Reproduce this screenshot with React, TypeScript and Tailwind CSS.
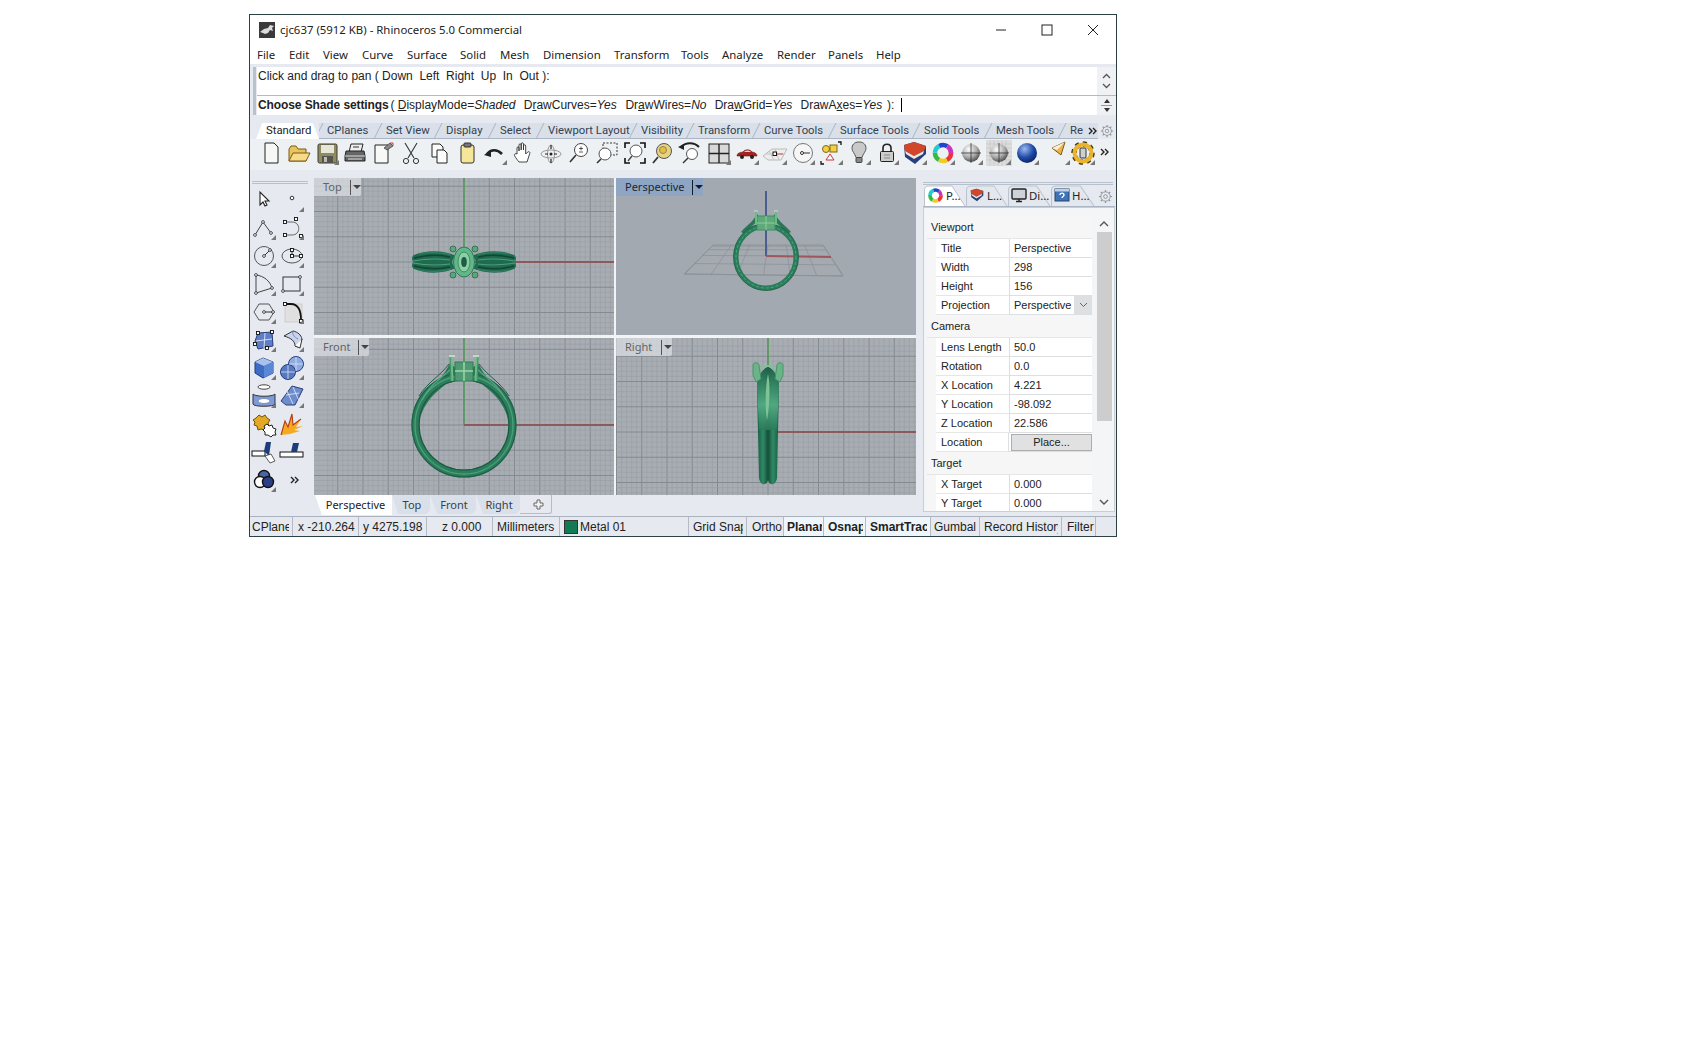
import type { ReactNode } from 'react';

const UI = "font-['Noto_Sans',sans-serif]";
const ARIAL = "font-['Liberation_Sans',Arial,sans-serif]";
const ROBOTO = "font-['Roboto',sans-serif]";

/* ---------- small helpers ---------- */

function Ico({ children, more }: { children: ReactNode; more?: boolean }) {
  return (
    <svg width="28" height="28" viewBox="0 0 28 28" className="block">
      {children}
      {more && <polygon points="26,21 26,26 21,26" fill="#777" />}
    </svg>
  );
}

function Chevrons({ color = '#222' }: { color?: string }) {
  return (
    <svg width="10" height="8" viewBox="0 0 10 8">
      <path d="M1 1l3 3-3 3M5 1l3 3-3 3" fill="none" stroke={color} strokeWidth="1.4" />
    </svg>
  );
}

function Handle({ x, y }: { x: number; y: number }) {
  return <rect x={x - 1.5} y={y - 1.5} width="3" height="3" fill="#fff" stroke="#111" strokeWidth="0.9" />;
}

function Dot({ x, y }: { x: number; y: number }) {
  return <circle cx={x} cy={y} r="1.4" fill="#fff" stroke="#222" strokeWidth="0.8" />;
}

function Sphere({ id, c1, c2, c3, r = 10 }: { id: string; c1: string; c2: string; c3: string; r?: number }) {
  return (
    <>
      <defs>
        <radialGradient id={id} cx="0.38" cy="0.3" r="0.8">
          <stop offset="0" stopColor={c1} />
          <stop offset="0.55" stopColor={c2} />
          <stop offset="1" stopColor={c3} />
        </radialGradient>
      </defs>
      <circle cx="14" cy="14" r={r} fill={`url(#${id})`} />
    </>
  );
}

const shade = <path d="M14 4v20M4 14h20" stroke="#333" strokeWidth="0.8" />;

/* ---------- standard toolbar icons ---------- */

const topIcons: { key: string; more?: boolean; draw: ReactNode }[] = [
  { key: 'new', draw: <path d="M8 4h9l4 4v16H8z" fill="#f7f7f5" stroke="#222" /> },
  {
    key: 'open',
    draw: (
      <>
        <path d="M4 10v12h17V10h-8l-2-3H6z" fill="#e9c35c" stroke="#7a5b16" />
        <path d="M4 22l4-8h17l-4 8z" fill="#f6dc8a" stroke="#7a5b16" />
      </>
    ),
  },
  {
    key: 'save',
    more: true,
    draw: (
      <>
        <rect x="5" y="5" width="19" height="19" rx="1.5" fill="#8f8a62" stroke="#3d3c30" />
        <rect x="8" y="6" width="13" height="8" fill="#e7e6da" />
        <rect x="9" y="17" width="11" height="7" fill="#55544a" />
        <rect x="11" y="18" width="3" height="5" fill="#bbb" />
      </>
    ),
  },
  {
    key: 'print',
    draw: (
      <>
        <path d="M10 5h12l-2 8H8z" fill="#eee" stroke="#222" />
        <path d="M5 12h18l1 5v5H4v-5z" fill="#666" stroke="#222" />
        <path d="M4 17h20M7 20h14" stroke="#ddd" />
        <path d="M12 8h6" stroke="#333" />
      </>
    ),
  },
  {
    key: 'setup',
    draw: (
      <>
        <path d="M6 6h13v18H6z" fill="#f8f8f6" stroke="#222" />
        <path d="M15 9l6-5 3 3-6 4z" fill="#8a8a8a" stroke="#333" strokeWidth="0.7" />
        <path d="M21 4l3 0 0 3" fill="none" stroke="#b44" />
      </>
    ),
  },
  {
    key: 'cut',
    draw: (
      <>
        <path d="M8 4l9 15M20 4l-9 15" stroke="#333" fill="none" strokeWidth="1.1" />
        <circle cx="9" cy="22" r="2.6" fill="none" stroke="#333" />
        <circle cx="19" cy="22" r="2.6" fill="none" stroke="#333" />
      </>
    ),
  },
  {
    key: 'copy',
    draw: (
      <>
        <path d="M7 5h8l3 3v10H7z" fill="#fbfbfa" stroke="#222" />
        <path d="M12 11h7l3 3v10H12z" fill="#fbfbfa" stroke="#222" />
      </>
    ),
  },
  {
    key: 'paste',
    draw: (
      <>
        <rect x="8" y="6" width="13" height="18" rx="2" fill="#f6e69a" stroke="#333" />
        <rect x="11" y="4" width="7" height="4" rx="1" fill="#777" stroke="#333" />
      </>
    ),
  },
  {
    key: 'undo',
    more: true,
    draw: (
      <>
        <path d="M6 15c4-5 10-5 15 0" fill="none" stroke="#222" strokeWidth="2.6" />
        <polygon points="3,16 10,11 10,18" fill="#222" />
      </>
    ),
  },
  {
    key: 'hand',
    draw: (
      <path
        d="M8 15V9c0-1.600 2-1.600 2 0v3V6c0-1.600 2.200-1.600 2.200 0v5V5c0-1.600 2.300-1.600 2.300 0v6V7c0-1.600 2.200-1.600 2.200 0v8l2-2c1.200-1 2.800.3 2 1.600L18 23h-8c-1.500-2-3-3.500-4.500-6.500-.7-1.400 1.200-2.400 2.500-1.500z"
        fill="#fff"
        stroke="#333"
        strokeWidth="0.9"
      />
    ),
  },
  {
    key: 'rotate',
    draw: (
      <>
        <ellipse cx="14" cy="15" rx="10" ry="4" fill="none" stroke="#999" />
        <ellipse cx="14" cy="15" rx="3.500" ry="9" fill="none" stroke="#999" />
        <path d="M14 6v4M14 20v4M8 15h3M17 15h3" stroke="#222" strokeWidth="1.2" />
        <circle cx="14" cy="15" r="1.500" fill="#222" />
      </>
    ),
  },
  {
    key: 'zoom',
    draw: (
      <>
        <circle cx="16" cy="11" r="6.500" fill="#fff" stroke="#444" />
        <path d="M11 16l-6 7" stroke="#333" strokeWidth="1.600" />
        <path d="M14 9.500h4M16 7.500v4M14 13h4" stroke="#333" strokeWidth="0.800" />
      </>
    ),
  },
  {
    key: 'zoomwin',
    draw: (
      <>
        <rect x="10" y="4" width="14" height="12" fill="none" stroke="#333" strokeDasharray="2 1.500" />
        <circle cx="12" cy="15" r="6" fill="#fff" stroke="#555" />
        <path d="M8 20l-4 4" stroke="#333" strokeWidth="1.600" />
      </>
    ),
  },
  {
    key: 'extents',
    draw: (
      <>
        <path d="M4 9V4h5M19 4h5v5M24 19v5h-5M9 24H4v-5" fill="none" stroke="#111" strokeWidth="1.600" />
        <circle cx="15" cy="12" r="6" fill="#fff" stroke="#555" />
        <path d="M11 17l-4 5" stroke="#444" strokeWidth="1.300" />
      </>
    ),
  },
  {
    key: 'zoomsel',
    draw: (
      <>
        <circle cx="15" cy="12" r="7.500" fill="#e9d27d" stroke="#555" />
        <circle cx="14" cy="11" r="3.500" fill="#e9bd3f" stroke="#886" />
        <path d="M9 18l-5 6" stroke="#333" strokeWidth="1.800" />
      </>
    ),
  },
  {
    key: 'rotzoom',
    draw: (
      <>
        <path d="M4 8c5-5 13-5 18 0" fill="none" stroke="#222" strokeWidth="2" />
        <polygon points="1,8 7,5 7,11" fill="#222" />
        <circle cx="15" cy="15" r="5.500" fill="#fff" stroke="#555" />
        <path d="M11 19l-5 5" stroke="#333" strokeWidth="1.500" />
      </>
    ),
  },
  {
    key: 'four',
    more: true,
    draw: (
      <>
        <rect x="4" y="5" width="20" height="19" fill="#d8d8d8" stroke="#222" />
        <path d="M14 5v19M4 14.500h20" stroke="#222" strokeWidth="1.400" />
      </>
    ),
  },
  {
    key: 'car',
    more: true,
    draw: (
      <>
        <path d="M4 17c0-3 3-3.500 6-4 2-3 7-3 9 0 3 .5 5 1.500 5 4z" fill="#a8201f" stroke="#6b1413" strokeWidth="0.600" />
        <path d="M11 13c2-2 5-2 7 0z" fill="#ddd" />
        <circle cx="9" cy="18" r="2" fill="#222" />
        <circle cx="19" cy="18" r="2" fill="#222" />
      </>
    ),
  },
  {
    key: 'plan',
    more: true,
    draw: (
      <>
        <path d="M2 17l9-7h15l-6 11H7z" fill="#ededed" stroke="#bbb" />
        <path d="M8 12l5 9M14 10l4 11M5 15h18" stroke="#c4c4c4" />
        <rect x="12" y="13" width="3.500" height="3.500" fill="#fff" stroke="#111" />
        <path d="M16 15h6" stroke="#b55" />
      </>
    ),
  },
  {
    key: 'circle',
    more: true,
    draw: (
      <>
        <circle cx="14" cy="14" r="9.500" fill="#f6f6f6" stroke="#777" />
        <path d="M13 14h8" stroke="#333" />
        <circle cx="13" cy="14" r="1.500" fill="#fff" stroke="#333" />
      </>
    ),
  },
  {
    key: 'snap',
    more: true,
    draw: (
      <>
        <circle cx="9" cy="10" r="3.500" fill="#f2cf44" stroke="#7d6a13" />
        <rect x="13" y="6" width="7" height="7" fill="#f2cf44" stroke="#7d6a13" />
        <polygon points="13,15 17,21 9,21" fill="#fff" stroke="#c33" />
        <path d="M21 3h3v3M4 22v3h3" fill="none" stroke="#111" strokeWidth="1.300" />
      </>
    ),
  },
  {
    key: 'bulb',
    more: true,
    draw: (
      <>
        <path d="M14 3c-5 0-7 3-7 6.500 0 3 3 5 4 9h6c1-4 4-6 4-9C21 6 19 3 14 3z" fill="#c9c9c9" stroke="#555" />
        <rect x="11" y="18.500" width="6" height="5" rx="1" fill="#888" stroke="#444" />
      </>
    ),
  },
  {
    key: 'lock',
    more: true,
    draw: (
      <>
        <path d="M10 13V9c0-5 8-5 8 0v4" fill="none" stroke="#222" strokeWidth="1.600" />
        <rect x="7.500" y="12.500" width="13" height="10" rx="1" fill="#ccc" stroke="#222" />
        <path d="M11 16h6M11 19h6" stroke="#888" />
      </>
    ),
  },
  {
    key: 'layers',
    more: true,
    draw: (
      <>
        <path d="M3 6l10-3 12 4v8L14 25 4 18z" fill="#25407e" />
        <path d="M3 6l10-3 12 4-2 5-10 5-9-5z" fill="#d2462a" />
        <path d="M4 12l9 5 10-5-1 3-9 5-8-5z" fill="#f3e4dc" />
      </>
    ),
  },
  {
    key: 'wheel',
    more: true,
    draw: (
      <>
        <circle cx="14" cy="14" r="8" fill="none" stroke="#e33" strokeWidth="4.500" strokeDasharray="8.400 41" />
        <circle cx="14" cy="14" r="8" fill="none" stroke="#ec2" strokeWidth="4.500" strokeDasharray="8.400 41" strokeDashoffset="-8.400" />
        <circle cx="14" cy="14" r="8" fill="none" stroke="#3b4" strokeWidth="4.500" strokeDasharray="8.400 41" strokeDashoffset="-16.800" />
        <circle cx="14" cy="14" r="8" fill="none" stroke="#2cc" strokeWidth="4.500" strokeDasharray="8.400 41" strokeDashoffset="-25.200" />
        <circle cx="14" cy="14" r="8" fill="none" stroke="#24c" strokeWidth="4.500" strokeDasharray="8.400 41" strokeDashoffset="-33.600" />
        <circle cx="14" cy="14" r="8" fill="none" stroke="#c3b" strokeWidth="4.500" strokeDasharray="8.400 41" strokeDashoffset="-42" />
      </>
    ),
  },
  {
    key: 'sphere1',
    more: true,
    draw: (
      <>
        <Sphere id="s1" c1="#fff" c2="#aaa" c3="#333" r={9} />
        {shade}
      </>
    ),
  },
  {
    key: 'sphere2',
    more: true,
    draw: (
      <>
        <rect x="1" y="1" width="26" height="26" fill="#ddd" />
        <path d="M5 1v26M9 1v26M13 1v26M17 1v26M21 1v26M1 5h26M1 9h26M1 13h26M1 17h26M1 21h26" stroke="#c4c4c4" strokeWidth="0.600" />
        <Sphere id="s2" c1="#fff" c2="#aaa" c3="#333" r={9} />
        {shade}
      </>
    ),
  },
  {
    key: 'sphere3',
    more: true,
    draw: <Sphere id="s3" c1="#9db9ec" c2="#1d49a8" c3="#0b1c52" />,
  },
];

/* ---------- left toolbar icons ---------- */

const leftIcons: { key: string; more?: boolean; draw: ReactNode }[] = [
  { key: 'arrow', draw: <path d="M10 6v13l3-3 2 4 2-1-2-4h4z" fill="#fff" stroke="#222" strokeWidth="1.100" /> },
  { key: 'point', more: true, draw: <circle cx="14" cy="12" r="1.800" fill="#fff" stroke="#333" /> },
  {
    key: 'poly',
    more: true,
    draw: (
      <>
        <path d="M5 21l8-13 8 11" fill="none" stroke="#444" />
        <Dot x={5} y={21} />
        <Dot x={13} y={8} />
        <Dot x={21} y={19} />
      </>
    ),
  },
  {
    key: 'cps',
    more: true,
    draw: (
      <>
        <path d="M7 8h7c9 0 9 13 0 13H7" fill="none" stroke="#666" />
        <Handle x={7} y={8} />
        <Handle x={18} y={5} />
        <Handle x={7} y={21} />
        <Handle x={23} y={22} />
      </>
    ),
  },
  {
    key: 'circle2',
    more: true,
    draw: (
      <>
        <circle cx="14" cy="14" r="9.500" fill="none" stroke="#555" />
        <path d="M14 14l6-6" stroke="#333" />
        <Dot x={14} y={14} />
        <Dot x={20} y={8} />
      </>
    ),
  },
  {
    key: 'ellipse',
    more: true,
    draw: (
      <>
        <ellipse cx="14" cy="14" rx="10" ry="7" fill="none" stroke="#555" />
        <path d="M14 7v7h9" stroke="#333" fill="none" />
        <Handle x={14} y={8} />
        <Handle x={14} y={14} />
        <Handle x={23} y={14} />
      </>
    ),
  },
  {
    key: 'arc',
    more: true,
    draw: (
      <>
        <path d="M6 5c8 1 14 6 16 13L6 23z" fill="none" stroke="#444" />
        <Dot x={6} y={5} />
        <Dot x={22} y={18} />
        <Dot x={6} y={23} />
      </>
    ),
  },
  {
    key: 'rect',
    more: true,
    draw: (
      <>
        <rect x="5" y="7" width="17" height="14" fill="none" stroke="#333" />
        <Dot x={22} y={7} />
        <Dot x={5} y={21} />
      </>
    ),
  },
  {
    key: 'hex',
    more: true,
    draw: (
      <>
        <polygon points="4,14 9,6 19,6 24,14 19,22 9,22" fill="none" stroke="#555" />
        <path d="M14 14h9" stroke="#333" />
        <Dot x={14} y={14} />
        <Dot x={23} y={14} />
      </>
    ),
  },
  {
    key: 'fillet',
    more: true,
    draw: (
      <>
        <rect x="7" y="6" width="17" height="18" fill="#e0e0e0" stroke="#ccc" />
        <path d="M7 6h6c7 0 10 6 10 16" fill="none" stroke="#111" strokeWidth="1.800" />
        <Handle x={7} y={6} />
        <Handle x={23} y={23} />
      </>
    ),
  },
  {
    key: 'srf',
    more: true,
    draw: (
      <>
        <path d="M8 7l14-1 1 14-15 3-3-8z" fill="#5e7ec8" stroke="#2a3d78" />
        <path d="M15 7l-1 15M6 15l16-2" stroke="#d5e0f5" />
        <Handle x={8} y={7} />
        <Handle x={22} y={6} />
        <Handle x={5} y={18} />
        <Handle x={17} y={22} />
      </>
    ),
  },
  {
    key: 'srf2',
    more: true,
    draw: (
      <>
        <path d="M6 10l9-5c5 1 8 4 9 8l-4 8-3-1c0-5-4-8-11-10z" fill="#c9d4ea" stroke="#333" />
        <path d="M15 5c-1 3 1 6 5 8" fill="none" stroke="#6e86bd" />
        <path d="M17 20l5 2 2-9" fill="#fff" stroke="#333" />
      </>
    ),
  },
  {
    key: 'box',
    more: true,
    draw: (
      <>
        <polygon points="13,4 23,8 23,19 13,24 5,19 5,8" fill="#3e6cc3" stroke="#1f3d85" />
        <polygon points="13,4 23,8 14,12 5,8" fill="#a9c2ec" />
        <polygon points="14,12 23,8 23,19 14,24" fill="#5c86d6" />
      </>
    ),
  },
  {
    key: 'union',
    more: true,
    draw: (
      <>
        <circle cx="18" cy="10" r="7.500" fill="#8eaae0" stroke="#27417f" />
        <circle cx="10" cy="18" r="7.500" fill="#5878bf" stroke="#27417f" />
        <path d="M3 18h14M10 11v14M11 10h14M18 3v14" stroke="#dde7f7" strokeWidth="0.800" />
      </>
    ),
  },
  {
    key: 'cyl',
    more: true,
    draw: (
      <>
        <ellipse cx="14" cy="5" rx="6" ry="2.200" fill="#fff" stroke="#444" />
        <path d="M3 12v10c0 3 22 3 22 0V12c-2 3-20 3-22 0z" fill="#7d9bd8" stroke="#333" />
        <ellipse cx="14" cy="19" rx="6" ry="2.500" fill="#fff" stroke="#7a8fbc" />
      </>
    ),
  },
  {
    key: 'patch',
    more: true,
    draw: (
      <>
        <path d="M3 19L14 4l11 3-8 16-9 0z" fill="#6c8ccc" stroke="#2f4076" />
        <path d="M8 13l13-2M8 7l7 15M15 5l7 16" stroke="#dce5f6" strokeWidth="0.900" />
      </>
    ),
  },
  {
    key: 'gears',
    draw: (
      <>
        <path d="M6 8l3-3 3 2 3-2 2 3 3 2-2 3 1 3-4 1-1 3-3-1-3 1-1-4-3-1 1-3-2-2z" fill="#e3a825" stroke="#6f5112" />
        <path d="M14 16l3-2 2 2 3-1 1 3 3 1-1 3 1 3-3 0-2 2-3-2-3 0v-3l-2-2 2-2z" fill="#fff" stroke="#222" />
      </>
    ),
  },
  {
    key: 'explode',
    draw: (
      <>
        <path d="M3 25l4-14 3 6 4-13 1 11 8-6-5 8 7-1-9 4 6 1-10 3z" fill="#f6a81f" />
        <path d="M3 25l4-14 3 6 4-13 1 11 8-6" fill="none" stroke="#b53a13" strokeWidth="1.100" />
      </>
    ),
  },
  {
    key: 'gb1',
    draw: (
      <>
        <rect x="2" y="13" width="13" height="5" fill="#fff" stroke="#111" />
        <polygon points="16,4 21,4 19,18 14,13" fill="#1e3c7c" />
        <polygon points="15,18 21,16 25,23 20,25" fill="#fff" stroke="#333" strokeWidth="0.800" />
      </>
    ),
  },
  {
    key: 'gb2',
    draw: (
      <>
        <rect x="2" y="14" width="23" height="5" fill="#fff" stroke="#111" />
        <polygon points="15,5 21,5 19,14 13,14" fill="#1e3c7c" />
      </>
    ),
  },
  {
    key: 'spot',
    more: true,
    draw: (
      <>
        <circle cx="14" cy="10" r="5.500" fill="#4c63a8" stroke="#111" strokeWidth="1.400" />
        <circle cx="10" cy="16" r="5.500" fill="#fff" stroke="#111" strokeWidth="1.400" />
        <circle cx="18" cy="16" r="5.500" fill="#2b3f86" stroke="#111" strokeWidth="1.400" />
      </>
    ),
  },
];

/* ---------- viewports ---------- */

function Grid({ ox, oy }: { ox: number; oy: number }) {
  const step = 5.05;
  const xs = Array.from({ length: 62 }, (_, i) => ox % (step * 5) + (i - 2) * step);
  const ys = Array.from({ length: 34 }, (_, i) => oy % (step * 5) + (i - 2) * step);
  return (
    <>
      {xs.map((x, i) => (
        <line key={`x${i}`} x1={x} x2={x} y1="0" y2="158" stroke={i % 5 === 2 ? '#848b90' : '#989ea3'} strokeWidth={i % 5 === 2 ? 1 : 0.6} />
      ))}
      {ys.map((y, i) => (
        <line key={`y${i}`} x1="0" x2="300" y1={y} y2={y} stroke={i % 5 === 2 ? '#848b90' : '#989ea3'} strokeWidth={i % 5 === 2 ? 1 : 0.6} />
      ))}
    </>
  );
}

function TopModel() {
  const band = (d: number) => (
    <g transform={`translate(150 84) scale(${d} 1)`}>
      <path d="M8 -6C20 -12 38 -12 50 -7C53 -5 52 -2 51 0C52 2 53 5 50 7C38 12 20 12 8 6C13 2 13 -2 8 -6z" fill="#1f6b50" />
      <path d="M14 -5C26 -8 38 -7 50 -4M14 5C26 8 38 7 50 4" fill="none" stroke="#124534" strokeWidth="1.400" />
      <path d="M14 -2C26 -3.500 40 -3 51 -1M14 2C26 3.500 40 3 51 1" fill="none" stroke="#4f9e7b" strokeWidth="1.100" />
      <path d="M13 -7C24 -10 36 -10 46 -8M13 7C24 10 36 10 46 8" fill="none" stroke="#3a8a68" strokeWidth="0.800" />
    </g>
  );
  return (
    <>
      <line x1="150" x2="150" y1="0" y2="84" stroke="#4f9a56" strokeWidth="1.500" />
      <line x1="150" x2="300" y1="84" y2="84" stroke="#8c5a5c" strokeWidth="2" />
      {band(1)}
      {band(-1)}
      <g fill="#5aa777" stroke="#205c46" strokeWidth="0.700">
        <circle cx="139" cy="71" r="3" />
        <circle cx="161" cy="71" r="3" />
        <circle cx="139" cy="97" r="3" />
        <circle cx="161" cy="97" r="3" />
      </g>
      <ellipse cx="150" cy="84" rx="10.500" ry="15" fill="#63b689" stroke="#2b7a58" />
      <ellipse cx="150" cy="84" rx="6" ry="10" fill="#8ed0a4" stroke="#3c8e68" />
      <ellipse cx="150" cy="84" rx="2.800" ry="5" fill="#1d5d45" />
    </>
  );
}

function FrontModel() {
  return (
    <>
      <line x1="150" x2="150" y1="0" y2="87" stroke="#4f9a56" strokeWidth="1.500" />
      <line x1="150" x2="300" y1="87" y2="87" stroke="#8c5a5c" strokeWidth="2" />
      <path d="M101 77C106 55 125 48 136 25L146 34C130 50 112 56 105 84zM199 77C194 55 175 48 164 25L154 34C170 50 188 56 195 84z" fill="#2a7657" />
      <circle cx="150" cy="87" r="48.500" fill="none" stroke="#2c7d5b" strokeWidth="8" />
      <circle cx="150" cy="87" r="52" fill="none" stroke="#1f6149" strokeWidth="1.200" />
      <circle cx="150" cy="87" r="49" fill="none" stroke="#4c9f7a" strokeWidth="1.300" />
      <circle cx="150" cy="87" r="45" fill="none" stroke="#1c5b44" strokeWidth="1.200" />
      <path d="M108 62C116 46 128 40 138 30M192 62C184 46 172 40 162 30" fill="none" stroke="#55a680" strokeWidth="1.300" />
      <path d="M105 58C114 44 126 38 135 26M195 58C186 44 174 38 165 26" fill="none" stroke="#1f5f47" strokeWidth="1" />
      <g fill="none">
        <rect x="141" y="24" width="18" height="19" fill="#4f9a72" stroke="#2f7a58" strokeWidth="1" />
        <path d="M150 24v19M141 33h18" stroke="#9ad6a8" strokeWidth="1.500" />
        <path d="M137 19l1 24M163 19l-1 24" stroke="#6dbb85" strokeWidth="3" />
        <path d="M136 19l1 24M164 19l-1 24" stroke="#2f7a58" strokeWidth="0.700" />
      </g>
      <path d="M135 18h6M159 18h6" stroke="#cfe6cf" strokeWidth="1.400" />
    </>
  );
}

function RightModel() {
  return (
    <>
      <defs>
        <linearGradient id="ringSide" x1="0" x2="1" y1="0" y2="0">
          <stop offset="0" stopColor="#175a41" />
          <stop offset="0.28" stopColor="#2f8a66" />
          <stop offset="0.5" stopColor="#154e3a" />
          <stop offset="0.72" stopColor="#2f8a66" />
          <stop offset="1" stopColor="#175a41" />
        </linearGradient>
        <linearGradient id="ringTop" x1="0" x2="0" y1="0" y2="1">
          <stop offset="0" stopColor="#1d5f48" />
          <stop offset="0.6" stopColor="#54ad84" />
          <stop offset="1" stopColor="#2a7a5a" />
        </linearGradient>
      </defs>
      <line x1="152" x2="152" y1="0" y2="34" stroke="#4f9a56" strokeWidth="1.500" />
      <line x1="162" x2="300" y1="94" y2="94" stroke="#8c5a5c" strokeWidth="2" />
      <path d="M141 48C141 38 148 30 152 29C156 30 163 38 163 48L161 140C160 148 153 148 152 142C151 148 144 148 143 140z" fill="url(#ringSide)" />
      <path d="M141 48C141 38 148 30 152 29C156 30 163 38 163 48L161 92H143z" fill="url(#ringTop)" opacity="0.9" />
      <path d="M152 36C149 50 149 72 151 82C153 72 155 50 152 36z" fill="#7cc396" />
      <g fill="#6ab585" stroke="#3c8e68" strokeWidth="0.800">
        <path d="M137 27c0-3 6-3 6 0l2 14-5 3-3-7z" />
        <path d="M167 27c0-3-6-3-6 0l-2 14 5 3 3-7z" />
      </g>
      <path d="M145 31C148 27 156 27 159 31" fill="none" stroke="#7cc396" strokeWidth="2" />
    </>
  );
}

function PerspectiveModel() {
  const xs = [0, 1, 2, 3, 4, 5, 6];
  const ys = [0, 1, 2, 3, 4];
  const lerp = (a: number, b: number, t: number) => a + (b - a) * t;
  return (
    <>
      <polygon points="68,96 227,98 207,67 97,67" fill="#a4aab0" stroke="#8d9398" />
      {xs.map((i) => (
        <line key={i} x1={lerp(68, 227, i / 6)} y1="97" x2={lerp(97, 207, i / 6)} y2="67" stroke="#8d9398" strokeWidth="0.800" />
      ))}
      {ys.map((i) => {
        const t = (i + 1) / 5;
        return <line key={i} x1={lerp(97, 68, t * t)} y1={lerp(67, 96, t * t)} x2={lerp(207, 227, t * t)} y2={lerp(67, 98, t * t)} stroke="#8d9398" strokeWidth="0.800" />;
      })}
      <line x1="150" x2="150" y1="13" y2="78" stroke="#4b5f8f" strokeWidth="2" />
      <line x1="150" x2="215" y1="78" y2="79" stroke="#a0575b" strokeWidth="2" />
      <path d="M125 54C130 48 137 44 141 36L144 40C139 46 133 50 129 56zM175 54C170 48 163 44 159 36L156 40C161 46 167 50 171 56z" fill="#2a7657" />
      <ellipse cx="150" cy="79" rx="30" ry="31" fill="none" stroke="#2a7d5a" strokeWidth="5" />
      <ellipse cx="150" cy="79" rx="32.500" ry="33.500" fill="none" stroke="#1d5f46" strokeWidth="0.800" />
      <ellipse cx="150" cy="79" rx="30" ry="31" fill="none" stroke="#4fa57f" strokeWidth="1" strokeDasharray="3 2" />
      <rect x="141" y="38" width="18" height="14" fill="#5fa97b" stroke="#3c8e68" />
      <path d="M150 38v14M141 45h18" stroke="#8bd09c" />
      <path d="M140 33v14M160 33v14" stroke="#6dbb85" strokeWidth="2" />
      <path d="M138 33h4M158 33h4" stroke="#c9e3c9" strokeWidth="1.200" />
    </>
  );
}

function Viewport({
  name,
  active,
  labelClass,
  barClass,
  children,
}: {
  name: string;
  active?: boolean;
  labelClass: string;
  barClass: string;
  children: ReactNode;
}) {
  return (
    <div className={`relative w-[300px] h-[157px] overflow-hidden ${active ? 'bg-[#a3a9b0]' : 'bg-[#a7adb2]'}`}>
      <svg width="300" height="157" viewBox="0 0 300 157" className="block">
        {children}
      </svg>
      <div
        className={`absolute left-0 top-0 h-[18px] flex items-center pl-[9px] text-[11px] rounded-br-[2px] ${UI} ${labelClass} ${
          active ? 'bg-[#8ea6c4] text-[#1c2735]' : 'bg-[#dde0e4]/70 text-[#5f6468]'
        }`}
      >
        <span className={barClass}>{name}</span>
        <span className={`h-[15px] w-px ${active ? 'bg-[#141c2a]' : 'bg-[#555]'}`} />
        <span className={`ml-[2px] w-0 h-0 border-x-[4px] border-x-transparent border-t-[4px] ${active ? 'border-t-[#141c2a]' : 'border-t-[#444]'}`} />
      </div>
    </div>
  );
}

/* ---------- data ---------- */

const menus = [
  ['File', 'w-[32px]'],
  ['Edit', 'w-[34px]'],
  ['View', 'w-[39px]'],
  ['Curve', 'w-[45px]'],
  ['Surface', 'w-[53px]'],
  ['Solid', 'w-[40px]'],
  ['Mesh', 'w-[43px]'],
  ['Dimension', 'w-[71px]'],
  ['Transform', 'w-[67px]'],
  ['Tools', 'w-[41px]'],
  ['Analyze', 'w-[55px]'],
  ['Render', 'w-[51px]'],
  ['Panels', 'w-[48px]'],
  ['Help', 'w-[30px]'],
];

const tabs = [
  ['CPlanes', 'w-[59px]'],
  ['Set View', 'w-[60px]'],
  ['Display', 'w-[54px]'],
  ['Select', 'w-[48px]'],
  ['Viewport Layout', 'w-[93px]'],
  ['Visibility', 'w-[57px]'],
  ['Transform', 'w-[66px]'],
  ['Curve Tools', 'w-[76px]'],
  ['Surface Tools', 'w-[84px]'],
  ['Solid Tools', 'w-[72px]'],
  ['Mesh Tools', 'w-[74px]'],
];

const status: [string, string][] = [
  ['CPlane', 'w-[43px] pl-[2px] pr-[3px]'],
  ['x -210.264', 'w-[66px] pl-[5px]'],
  ['y 4275.198', 'w-[68px] pl-[4px]'],
  ['z 0.000', 'w-[66px] pl-[15px]'],
  ['Millimeters', 'w-[67px] pl-[4px]'],
];

const status2: [string, string, boolean?][] = [
  ['Grid Snap', 'w-[58px] pl-[4px] pr-[3px]'],
  ['Ortho', 'w-[37px] pl-[5px]'],
  ['Planar', 'w-[40px] pl-[3px] pr-[1px]', true],
  ['Osnap', 'w-[42px] pl-[4px] pr-[2px]', true],
  ['SmartTrack', 'w-[65px] pl-[4px] pr-[3px]', true],
  ['Gumbal', 'w-[49px] pl-[3px]'],
  ['Record History', 'w-[82px] pl-[4px] pr-[3px]'],
  ['Filter', 'w-[34px] pl-[5px]'],
];

type Row = { head?: string; label?: string; value?: string; select?: boolean; button?: boolean };

const props: Row[] = [
  { head: 'Viewport' },
  { label: 'Title', value: 'Perspective' },
  { label: 'Width', value: '298' },
  { label: 'Height', value: '156' },
  { label: 'Projection', value: 'Perspective', select: true },
  { head: 'Camera' },
  { label: 'Lens Length', value: '50.0' },
  { label: 'Rotation', value: '0.0' },
  { label: 'X Location', value: '4.221' },
  { label: 'Y Location', value: '-98.092' },
  { label: 'Z Location', value: '22.586' },
  { label: 'Location', value: 'Place...', button: true },
  { head: 'Target' },
  { label: 'X Target', value: '0.000' },
  { label: 'Y Target', value: '0.000' },
];

const viewTab = "h-[19px] bg-[#d9e0ea] text-center leading-[19px] pl-[2px] [clip-path:polygon(0_0,100%_0,100%_80%,90%_100%,16%_100%)]";

function TabSlash() {
  return (
    <svg width="10" height="16" viewBox="0 0 10 16" className="shrink-0 -mx-[5px]">
      <path d="M1 16L9 0" stroke="#aab4c3" fill="none" />
    </svg>
  );
}

/* ---------- page ---------- */

export default function App() {
  return (
    <div className="min-h-screen bg-white">
      <div className={`ml-[249px] mt-[14px] inline-block w-[868px] border border-[#2c4145] bg-[#e6eaf0] ${UI}`}>
        {/* title bar */}
        <div className="h-[30px] bg-white flex items-center pl-[9px] text-[#222] text-[11.4px]">
          <svg width="16" height="16" viewBox="0 0 16 16" className="mr-[5px]">
            <rect width="16" height="16" fill="#3a3a3a" />
            <path d="M1 10l4-3 4-1 2-3 4 1-2 2 1 3-3-1-2 3-3 1-2-1z" fill="#dcdcdc" />
          </svg>
          <span>cjc637 (5912 KB) - Rhinoceros 5.0 Commercial</span>
          <div className="ml-auto flex items-center">
            <svg width="46" height="14" viewBox="0 0 46 14"><path d="M18 7h10" stroke="#222" /></svg>
            <svg width="46" height="14" viewBox="0 0 46 14"><rect x="18" y="2" width="10" height="10" fill="none" stroke="#222" /></svg>
            <svg width="46" height="14" viewBox="0 0 46 14"><path d="M18 2l10 10M28 2L18 12" stroke="#222" /></svg>
          </div>
        </div>

        {/* menu */}
        <div className="h-[19px] bg-white flex items-center pl-[7px] text-[11.4px] text-[#222]">
          {menus.map(([m, w]) => (
            <span key={m} className={`${w} shrink-0`}>{m}</span>
          ))}
        </div>

        {/* command area */}
        <div className="pt-[3px] pl-[3px] flex">
          <div className="w-[3px] bg-[#b9c1cc] mr-[1px]" />
          <div className={`flex-1 ${ARIAL} text-[12px] text-[#222]`}>
            <div className="h-[29px] bg-white border-b border-[#b5bac2] flex">
              <div className="flex-1 pl-[1px] leading-[18px] whitespace-pre">Click and drag to pan ( Down  Left  Right  Up  In  Out ):</div>
              <div className="w-[19px] bg-[#f0f1f4] flex flex-col items-center justify-center gap-[4px]">
                <svg width="9" height="6" viewBox="0 0 9 6"><path d="M1 5l3.500-3.500L8 5" fill="none" stroke="#555" strokeWidth="1.300" /></svg>
                <svg width="9" height="6" viewBox="0 0 9 6"><path d="M1 1l3.500 3.500L8 1" fill="none" stroke="#555" strokeWidth="1.300" /></svg>
              </div>
            </div>
            <div className="h-[19px] bg-white flex items-center">
              <div className="flex-1 pl-[1px] pb-[2px] whitespace-pre flex items-center">
                <b className="-mr-[1.5px] tracking-[-0.1px]">Choose Shade settings</b>
                <span>{' ( '}<u>D</u>isplayMode=<i className="pr-[1.5px]">Shaded</i>{'  D'}<u>r</u>awCurves=<i className="pr-[2px]">Yes</i>{'  Dr'}<u>a</u>wWires=<i className="pr-[1.5px]">No</i>{'  Dra'}<u>w</u>Grid=<i className="pr-[1.5px]">Yes</i>{'  DrawA'}<u>x</u>es=<i className="pr-[1.5px]">Yes</i>{' ):  '}</span>
                <span className="w-px h-[14px] bg-black" />
              </div>
              <div className="w-[19px] h-full bg-[#eef0f3] flex flex-col items-center justify-center gap-[2px]">
                <span className="w-0 h-0 border-x-[3px] border-x-transparent border-b-[4px] border-b-[#333]" />
                <span className="w-[11px] h-px bg-[#999]" />
                <span className="w-0 h-0 border-x-[3px] border-x-transparent border-t-[4px] border-t-[#333]" />
              </div>
            </div>
          </div>
        </div>

        {/* toolbar tabs */}
        <div className={`mt-[8px] h-[16px] flex items-end pl-[6px] text-[11.3px] text-[#34404f] leading-[15px] ${ROBOTO}`}>
          <div className="w-[63px] h-[16px] bg-white pl-[10px] text-[#222] shrink-0 [clip-path:polygon(0_100%,10%_0,90%_0,100%_100%)]">Standard</div>
          <div className="flex-1 flex h-[16px] bg-[#d9e0ea] border-b border-[#aab4c3] overflow-hidden">
            {tabs.map(([t, w]) => (
              <div key={t} className={`${w} shrink-0 flex items-start whitespace-nowrap`}>
                <TabSlash />
                <span className="pl-[8px]">{t}</span>
              </div>
            ))}
            <div className="flex items-start whitespace-nowrap">
              <TabSlash />
              <span className="pl-[8px]">Re</span>
            </div>
          </div>
          <div className="w-[10px] h-[16px] bg-[#d9e0ea] border-b border-[#aab4c3] flex items-center justify-center shrink-0"><Chevrons /></div>
          <div className="w-[18px] h-[16px] flex items-center justify-center shrink-0">
            <Gear size={14} />
          </div>
        </div>

        {/* standard toolbar */}
        <div className="h-[31px] bg-[#eef1f4] flex items-start pl-[7px]">
          {topIcons.map((i) => (
            <div key={i.key} className="w-[28px] h-[28px] shrink-0">
              <Ico more={i.more}>{i.draw}</Ico>
            </div>
          ))}
          <div className="w-[28px] h-[28px] shrink-0 ml-[3px]">
            <Ico more>
              <path d="M8 9l13-6-4 13z" fill="#f0b24d" stroke="#7a5b16" />
              <path d="M8 9l13-6-8 8z" fill="#f6f1dc" />
            </Ico>
          </div>
          <div className="w-[28px] h-[28px] shrink-0 -ml-[3px]">
            <Ico more>
              <circle cx="14" cy="14" r="9" fill="none" stroke="#4a3a10" strokeWidth="5.500" strokeDasharray="3.500 3.500" />
              <circle cx="14" cy="14" r="8.500" fill="none" stroke="#eab32d" strokeWidth="4" />
              <rect x="11" y="9" width="6" height="10" rx="1" fill="#cfcfcf" stroke="#333" />
            </Ico>
          </div>
          <div className="ml-[3px] mt-[9px]"><Chevrons /></div>
        </div>

        {/* main */}
        <div className="flex pt-[8px] h-[346px]">
          {/* left toolbar */}
          <div className="w-[64px] shrink-0 -mt-[8px]">
            <div className="mt-[11px] ml-[2px] w-[56px] h-[3px] border-y border-[#b8c0cb]" />
            <div className="grid grid-cols-2 w-[56px] mt-[2px]">
              {leftIcons.map((i) => (
                <Ico key={i.key} more={i.more}>{i.draw}</Ico>
              ))}
              <div className="w-[28px] h-[28px] flex items-center pl-[12px]"><Chevrons /></div>
            </div>
          </div>

          {/* viewports */}
          <div className="w-[602px] shrink-0">
            <div className="grid grid-cols-[300px_300px] gap-x-[2px] gap-y-[3px] bg-[#f2f3f5]">
              <Viewport name="Top" labelClass="w-[47px]" barClass="w-[28px]">
                <Grid ox={150} oy={84} />
                <TopModel />
              </Viewport>
              <Viewport name="Perspective" active labelClass="w-[87px]" barClass="w-[68px]">
                <PerspectiveModel />
              </Viewport>
              <Viewport name="Front" labelClass="w-[55px]" barClass="w-[36px]">
                <Grid ox={150} oy={87} />
                <FrontModel />
              </Viewport>
              <Viewport name="Right" labelClass="w-[56px]" barClass="w-[37px]">
                <Grid ox={152} oy={94} />
                <RightModel />
              </Viewport>
            </div>
            <div className="flex h-[21px] text-[11px] text-[#34404f] items-start pl-[1px]">
              <div className="w-[77px] h-[20px] bg-white text-[#222] text-center pl-[4px] leading-[20px] [clip-path:polygon(0_0,100%_0,100%_100%,9%_100%)]">Perspective</div>
              <div className={`w-[38px] ${viewTab}`}>Top</div>
              <div className={`w-[46px] ${viewTab}`}>Front</div>
              <div className={`w-[44px] ${viewTab}`}>Right</div>
              <div className="w-[32px] h-[19px] pl-[5px] border-b border-r border-[#b5bdc9] flex items-center justify-center rounded-br-[3px]">
                <svg width="11" height="11" viewBox="0 0 11 11"><path d="M4 1h3v3h3v3H7v3H4V7H1V4h3z" fill="#f2f2f2" stroke="#666" /></svg>
              </div>
            </div>
          </div>

          {/* properties panel */}
          <div className="ml-[7px] w-[192px] shrink-0 -mt-[8px]">
            <div className="mt-[12px] w-[190px] h-[3px] border-y border-[#b8c0cb]" />
            <div className="h-[22px] flex items-end pl-[1px] text-[11.4px] text-[#222] border-b border-[#aab4c3]">
              <PanelTab w="w-[42px]" active icon={<WheelSmall />} text="P..." />
              <PanelTab w="w-[42px]" icon={<LayerSmall />} text="L..." />
              <PanelTab w="w-[43px]" icon={<MonitorSmall />} text="Di..." />
              <PanelTab w="w-[44px]" icon={<HelpSmall />} text="H..." />
              <div className="w-[20px] h-[20px] flex items-center justify-center"><Gear size={15} /></div>
            </div>
            <div className={`h-[305px] bg-[#f4f5f6] border border-[#c9ced5] flex pt-[8px] pl-[3px] overflow-hidden ${ARIAL}`}>
              <div className="w-[165px] shrink-0">
                {props.map((r, i) =>
                  r.head ? (
                    <div key={i} className="h-[23px] leading-[23px] pl-[4px] text-[11px] text-[#222] bg-[#f6f6f6] border-b border-[#e4e6e8]">{r.head}</div>
                  ) : (
                    <div key={i} className="h-[19px] flex text-[11px] leading-[18px] text-[#222] bg-white">
                      <div className="w-[9px] bg-[#f6f6f6]" />
                      <div className="w-[73px] pl-[5px] border-b border-[#e4e6e8] whitespace-nowrap">{r.label}</div>
                      <div className="flex-1 border-l border-b border-[#dcdfe2] flex items-center pl-[4px] relative">
                        {r.button ? (
                          <div className="-ml-[2px] w-[81px] h-[17px] bg-[#e1e1e1] border border-[#adadad] text-center leading-[15px]">{r.value}</div>
                        ) : (
                          <span className="whitespace-nowrap">{r.value}</span>
                        )}
                        {r.select && (
                          <div className="ml-auto w-[18px] h-[18px] bg-[#dedfe1] flex items-center justify-center">
                            <svg width="9" height="6" viewBox="0 0 9 6"><path d="M1 1l3.500 3.500L8 1" fill="none" stroke="#666" /></svg>
                          </div>
                        )}
                      </div>
                    </div>
                  ),
                )}
              </div>
              <div className="ml-[4px] w-[16px] shrink-0 flex flex-col items-center">
                <div className="h-[16px] flex items-center"><svg width="10" height="6" viewBox="0 0 10 6"><path d="M1 5l4-4 4 4" fill="none" stroke="#555" strokeWidth="1.400" /></svg></div>
                <div className="w-[15px] h-[189px] bg-[#cdcdcd]" />
                <div className="flex-1" />
                <div className="h-[18px] flex items-center"><svg width="10" height="6" viewBox="0 0 10 6"><path d="M1 1l4 4 4-4" fill="none" stroke="#555" strokeWidth="1.400" /></svg></div>
              </div>
            </div>
          </div>
        </div>

        {/* status bar */}
        <div className={`h-[20px] flex border-t border-[#aab2be] text-[12px] text-[#222] leading-[21px] ${ARIAL}`}>
          {status.map(([t, w]) => (
            <div key={t} className={`${w} shrink-0 border-r border-[#b5bbc4]`}>
              <div className="overflow-hidden whitespace-nowrap">{t}</div>
            </div>
          ))}
          <div className="w-[129px] shrink-0 flex items-start pl-[4px] gap-[2px] border-r border-[#b5bbc4]">
            <span className="w-[14px] h-[14px] mt-[3px] bg-[#137a54] border border-[#333]" />
            Metal 01
          </div>
          {status2.map(([t, w, on]) => (
            <div key={t} className={`${w} shrink-0 border-r border-[#b5bbc4] ${on ? 'font-bold bg-[#eef5fb]' : ''}`}>
              <div className="overflow-hidden whitespace-nowrap">{t}</div>
            </div>
          ))}
        </div>
      </div>
    </div>
  );
}

function Gear({ size }: { size: number }) {
  return (
    <svg width={size} height={size} viewBox="0 0 16 16">
      <circle cx="8" cy="8" r="5" fill="none" stroke="#8f949a" strokeWidth="1" />
      <circle cx="8" cy="8" r="2" fill="none" stroke="#8f949a" strokeWidth="1" />
      <path d="M8 1v2M8 13v2M1 8h2M13 8h2M3 3l1.500 1.500M11.500 11.500L13 13M13 3l-1.500 1.500M4.500 11.500L3 13" stroke="#8f949a" strokeWidth="1.300" />
    </svg>
  );
}

function PanelTab({ w, active, icon, text }: { w: string; active?: boolean; icon: ReactNode; text: string }) {
  return (
    <div className={`${w} relative h-[21px] shrink-0 flex items-center pl-[3px] gap-[2px] ${active ? 'text-[#222]' : ''}`}>
      <svg viewBox="0 0 42 21" preserveAspectRatio="none" className="absolute inset-0 w-full h-full">
        <path d="M0.500 21V5Q0.500 1 5 1H28L41 21" fill={active ? '#fff' : '#e3e8ef'} stroke="#bcc3cd" />
      </svg>
      <span className="relative flex items-center gap-[2px]">
        {icon}
        <span>{text}</span>
      </span>
    </div>
  );
}

function WheelSmall() {
  return (
    <svg width="17" height="17" viewBox="0 0 28 28">
      {[
        ['#e33', 0],
        ['#ec2', -8.4],
        ['#3b4', -16.8],
        ['#2cc', -25.2],
        ['#24c', -33.6],
        ['#c3b', -42],
      ].map(([c, o]) => (
        <circle key={String(c)} cx="14" cy="14" r="9" fill="none" stroke={String(c)} strokeWidth="6" strokeDasharray="9.500 47" strokeDashoffset={Number(o) * 1.13} />
      ))}
    </svg>
  );
}

function LayerSmall() {
  return (
    <svg width="16" height="16" viewBox="0 0 28 28">
      <path d="M3 6l10-3 12 4v8L14 25 4 18z" fill="#25407e" />
      <path d="M3 6l10-3 12 4-2 5-10 5-9-5z" fill="#d2462a" />
      <path d="M4 12l9 5 10-5-1 3-9 5-8-5z" fill="#f3e4dc" />
    </svg>
  );
}

function MonitorSmall() {
  return (
    <svg width="16" height="16" viewBox="0 0 16 16">
      <rect x="1" y="2" width="14" height="10" rx="1" fill="#cfd3d9" stroke="#222" strokeWidth="1.400" />
      <path d="M5 14.500h6M8 12v2" stroke="#222" strokeWidth="1.400" />
    </svg>
  );
}

function HelpSmall() {
  return (
    <svg width="16" height="16" viewBox="0 0 16 16">
      <rect x="1" y="2" width="14" height="12" fill="#3f74b8" stroke="#24456f" />
      <rect x="1" y="2" width="14" height="2.500" fill="#bcd0ea" />
      <path d="M6 8c0-2.500 4-2.500 4 0 0 1.500-2 1.500-2 3" fill="none" stroke="#fff" strokeWidth="1.400" />
    </svg>
  );
}
